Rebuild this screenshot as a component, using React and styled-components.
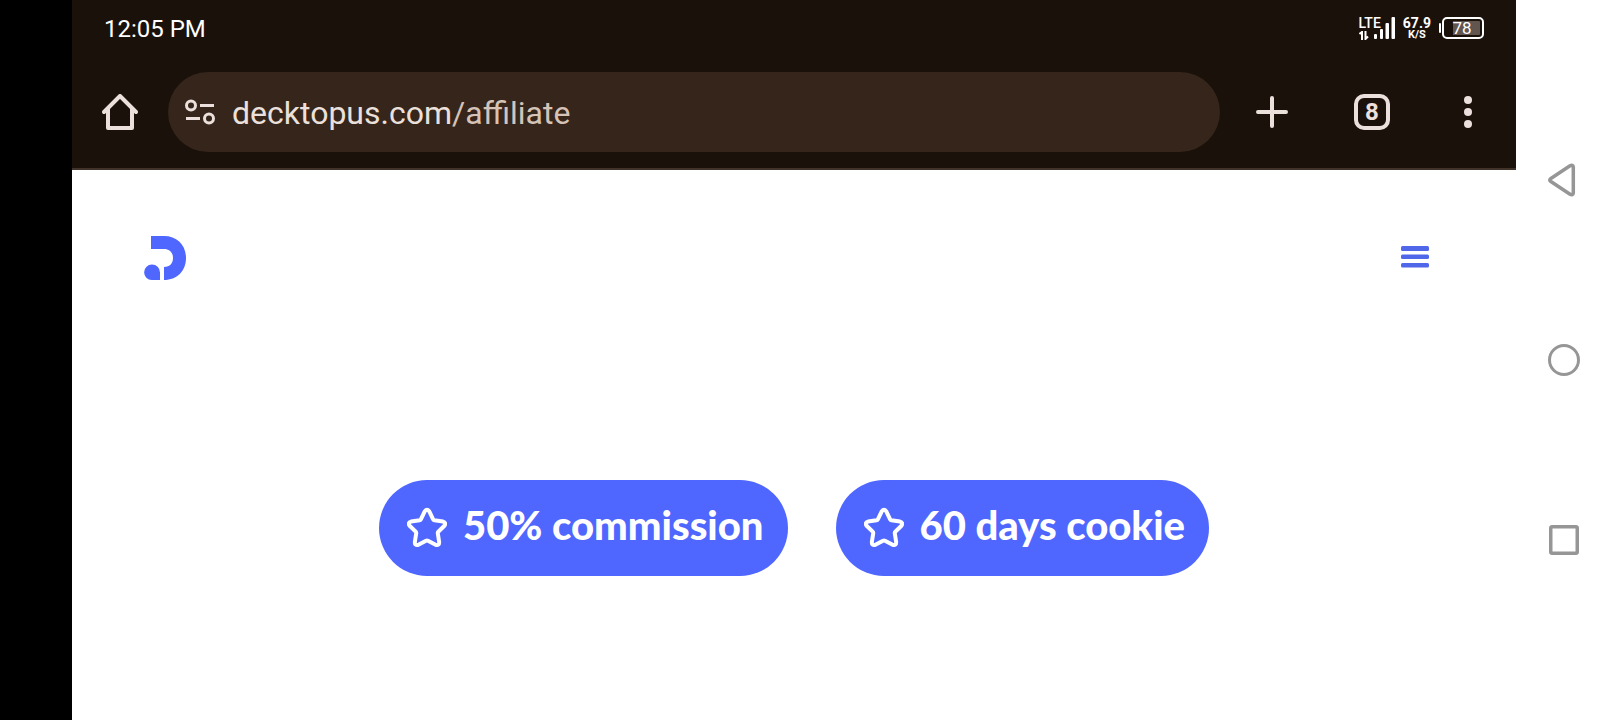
import React from "react";
import styled, { createGlobalStyle } from "styled-components";

const GlobalStyle = createGlobalStyle`
  *, *::before, *::after { box-sizing: border-box; }
  body { margin: 0; background: #ffffff; font-family: Roboto, "Noto Sans", sans-serif; }
  button, input { font: inherit; color: inherit; }
`;

const Screen = styled.div`
  display: grid;
  grid-template-columns: 72px minmax(0, 1fr) 96px;
  min-height: 100vh;
`;

const Cutout = styled.div`
  background: #000000;
`;

const Browser = styled.div`
  display: flex;
  flex-direction: column;
  background: #ffffff;
`;

const Chrome = styled.div`
  background: #1a110b;
  color: #ece0dc;
  border-bottom: 2px solid #41322a;
`;

const StatusBar = styled.div`
  display: flex;
  align-items: center;
  justify-content: space-between;
  height: 56px;
  padding: 0 32px;
  color: #ffffff;
`;

const Clock = styled.time`
  padding-top: 2px;
  font-size: 24px;
  line-height: 32px;
`;

const Indicators = styled.div`
  display: flex;
  align-items: center;
  gap: 8px;
`;

const Signal = styled.div`
  display: flex;
  align-items: flex-end;
  height: 24px;
`;

const Network = styled.div`
  display: flex;
  flex-direction: column;
  gap: 1px;
  margin-right: -8px;
  font-size: 14px;
  font-weight: 500;
  line-height: 13px;
`;

const Speed = styled.div`
  display: flex;
  flex-direction: column;
  align-items: center;
  font-size: 14px;
  font-weight: 700;
  line-height: 13px;
`;

const SpeedUnit = styled.span`
  font-size: 11px;
  line-height: 10px;
`;

const Battery = styled.div`
  display: flex;
  align-items: center;
  gap: 1px;
`;

const BatteryCap = styled.span`
  width: 2px;
  height: 10px;
  border-radius: 1px;
  background: #ffffff;
`;

const BatteryBody = styled.span`
  width: 42px;
  height: 22px;
  padding: 2px 2px 2px 0;
  border: 2px solid #ffffff;
  border-radius: 5px;
`;

const BatteryLevel = styled.span`
  display: block;
  border-radius: 1px;
  background: linear-gradient(to right, transparent 25%, #61564f 25%);
  font-size: 17px;
  line-height: 14px;
  text-align: center;
`;

const Toolbar = styled.div`
  display: flex;
  align-items: center;
  height: 112px;
`;

const ToolButton = styled.button`
  display: grid;
  place-items: center;
  flex: none;
  width: ${(p) => p.$width || 96}px;
  height: 96px;
  padding: 0;
  border: 0;
  background: transparent;
  cursor: pointer;
`;

const AddressBar = styled.form`
  display: flex;
  align-items: center;
  flex: 1;
  min-width: 0;
  height: 80px;
  padding: 2px 16px 0;
  border-radius: 40px;
  background: #35251a;
  font-size: 32px;
  line-height: 40px;
`;

const SiteButton = styled.button`
  display: grid;
  place-items: center;
  width: 32px;
  height: 48px;
  margin-right: 16px;
  padding: 0 0 2px;
  border: 0;
  background: transparent;
  cursor: pointer;
`;

const AddressInput = styled.input`
  field-sizing: content;
  padding: 0;
  border: 0;
  outline: 0;
  background: transparent;
`;

const AddressPath = styled.span`
  color: #d6c3b7;
`;

const TabCount = styled.span`
  display: grid;
  place-items: center;
  width: 36px;
  height: 36px;
  border: 4px solid #ece0dc;
  border-radius: 10px;
  font-size: 24px;
  font-weight: 700;
  line-height: 28px;
`;

const SiteHeader = styled.header`
  display: flex;
  align-items: center;
  justify-content: space-between;
  height: 176px;
  padding: 0 72px;
`;

const LogoLink = styled.a`
  display: flex;
`;

const MenuButton = styled.button`
  display: grid;
  place-items: center;
  width: 58px;
  height: 58px;
  padding: 0 0 2px;
  border: 0;
  background: transparent;
  cursor: pointer;
`;

const Perks = styled.ul`
  display: flex;
  flex-wrap: wrap;
  justify-content: center;
  gap: 48px;
  margin: 0;
  padding: 134px 48px 96px;
  list-style: none;
`;

const Perk = styled.li`
  display: flex;
  align-items: center;
  gap: 16px;
  height: 96px;
  padding: 0 24px 0 28px;
  border-radius: 48px;
  background: #4f67ff;
  color: #ffffff;
  font-family: Lato, "Open Sans", sans-serif;
  font-size: 40px;
  font-weight: 900;
  line-height: 48px;
`;

const PerkText = styled.span`
  padding-bottom: 6px;
`;

const SystemNav = styled.nav`
  display: flex;
  flex-direction: column;
  align-items: center;
  justify-content: center;
  background: #ffffff;
`;

const NavButton = styled.button`
  display: grid;
  place-items: center;
  width: 96px;
  height: 25vh;
  padding: 0;
  border: 0;
  background: transparent;
  cursor: pointer;
`;

function StarIcon() {
  return (
    <svg width="40" height="42" viewBox="1 0 40 42" fill="none" stroke="#fff" strokeWidth="4" strokeLinejoin="round" aria-hidden="true">
      <path d="M18.7 4.4Q21 1.2 23.3 4.4L27 12.2Q27.4 13.1 28.4 13.3L37 14.6Q40.6 15.7 38.4 18.7L32.3 24.7Q31.6 25.4 31.8 26.4L33.2 35.2Q33.2 39 29.6 37.8L22 33.7Q21 33.2 20 33.7L12.4 37.8Q8.800 39 8.800 35.2L10.2 26.4Q10.4 25.4 9.700 24.7L3.600 18.7Q1.400 15.7 5 14.6L13.6 13.3Q14.6 13.1 15 12.2Z" />
    </svg>
  );
}

const perks = ["50% commission", "60 days cookie"];

export default function App() {
  return (
    <Screen>
      <GlobalStyle />
      <Cutout />
      <Browser>
        <Chrome>
          <StatusBar>
            <Clock>12:05 PM</Clock>
            <Indicators>
              <Signal>
                <Network>
                  <span>LTE</span>
                  <svg width="10" height="9" viewBox="0 0 10 9" fill="none" stroke="#fff" strokeWidth="2" aria-hidden="true">
                    <path d="M0.500 3L3 1V9M6.500 0V8L9 5.500" />
                  </svg>
                </Network>
                <svg width="22" height="24" viewBox="0 0 22 24" fill="#fff" aria-hidden="true">
                  <rect x="1" y="18" width="3" height="5" rx="1" />
                  <rect x="7" y="13" width="3" height="10" rx="1" />
                  <rect x="12.500" y="7" width="3.500" height="16" rx="1" />
                  <rect x="18.500" y="1" width="3.500" height="22" rx="1" />
                </svg>
              </Signal>
              <Speed>
                <span>67.9</span>
                <SpeedUnit>K/S</SpeedUnit>
              </Speed>
              <Battery>
                <BatteryCap />
                <BatteryBody>
                  <BatteryLevel>78</BatteryLevel>
                </BatteryBody>
              </Battery>
            </Indicators>
          </StatusBar>
          <Toolbar>
            <ToolButton type="button" aria-label="Home">
              <svg width="36" height="36" viewBox="0 0 36 36" fill="none" stroke="#ece0dc" strokeWidth="4" strokeLinecap="round" strokeLinejoin="round" aria-hidden="true">
                <path d="M2 18L18 2L34 18M6 15V34H30V15" />
              </svg>
            </ToolButton>
            <AddressBar onSubmit={(e) => e.preventDefault()}>
              <SiteButton type="button" aria-label="Site information">
                <svg width="30" height="26" viewBox="0 0 30 26" fill="none" stroke="#ece0dc" strokeWidth="3" aria-hidden="true">
                  <circle cx="6" cy="6.500" r="4.500" />
                  <path d="M15 6.500H29M1 19.500H15" />
                  <circle cx="24" cy="19.500" r="4.500" />
                </svg>
              </SiteButton>
              <AddressInput aria-label="Address" defaultValue="decktopus.com" />
              <AddressPath>/affiliate</AddressPath>
            </AddressBar>
            <ToolButton type="button" aria-label="New tab" $width={104}>
              <svg width="32" height="32" viewBox="0 0 32 32" stroke="#ece0dc" strokeWidth="4" strokeLinecap="round" aria-hidden="true">
                <path d="M16 2V30M2 16H30" />
              </svg>
            </ToolButton>
            <ToolButton type="button" aria-label="8 open tabs">
              <TabCount>8</TabCount>
            </ToolButton>
            <ToolButton type="button" aria-label="More options">
              <svg width="8" height="32" viewBox="0 0 8 32" fill="#ece0dc" aria-hidden="true">
                <circle cx="4" cy="4" r="4" />
                <circle cx="4" cy="16" r="4" />
                <circle cx="4" cy="28" r="4" />
              </svg>
            </ToolButton>
          </Toolbar>
        </Chrome>
        <SiteHeader>
          <LogoLink href="#" aria-label="Decktopus">
            <svg width="43" height="44" viewBox="0 0 43 44" fill="#4f67ff" aria-hidden="true">
              <path d="M7 0H20C33 0 42 9 42 22C42 35 33 44 20 44V31C26 31 29 27 29 22C29 16 25 13 20 13H7Z" />
              <path d="M8 28.500A8 8 0 0 1 16 36.500V44H7.750A7.750 7.750 0 0 1 8 28.500Z" />
            </svg>
          </LogoLink>
          <MenuButton type="button" aria-label="Menu">
            <svg width="28" height="22" viewBox="0 0 28 22" fill="#4f67e8" aria-hidden="true">
              <rect y="0" width="28" height="5" rx="1.500" />
              <rect y="8.500" width="28" height="4.500" rx="1.500" />
              <rect y="17" width="28" height="4.500" rx="1.500" />
            </svg>
          </MenuButton>
        </SiteHeader>
        <main>
          <Perks>
            {perks.map((text) => (
              <Perk key={text}>
                <StarIcon />
                <PerkText>{text}</PerkText>
              </Perk>
            ))}
          </Perks>
        </main>
      </Browser>
      <SystemNav aria-label="System navigation">
        <NavButton type="button" aria-label="Back">
          <svg width="32" height="34" viewBox="0 0 32 34" fill="none" stroke="#969696" strokeWidth="3.500" strokeLinejoin="round" aria-hidden="true">
            <path d="M2.500 15.700Q1 17 2.500 18.300L22 31.200Q25 32.500 25.300 30V4Q25 1.500 22 2.800Z" />
          </svg>
        </NavButton>
        <NavButton type="button" aria-label="Home screen">
          <svg width="32" height="32" viewBox="0 0 32 32" fill="none" stroke="#969696" strokeWidth="3" aria-hidden="true">
            <circle cx="16" cy="16" r="14.500" />
          </svg>
        </NavButton>
        <NavButton type="button" aria-label="Recent apps">
          <svg width="30" height="30" viewBox="0 0 30 30" fill="none" stroke="#969696" strokeWidth="3.500" aria-hidden="true">
            <rect x="1.750" y="1.750" width="26.500" height="26.500" rx="1.500" />
          </svg>
        </NavButton>
      </SystemNav>
    </Screen>
  );
}
